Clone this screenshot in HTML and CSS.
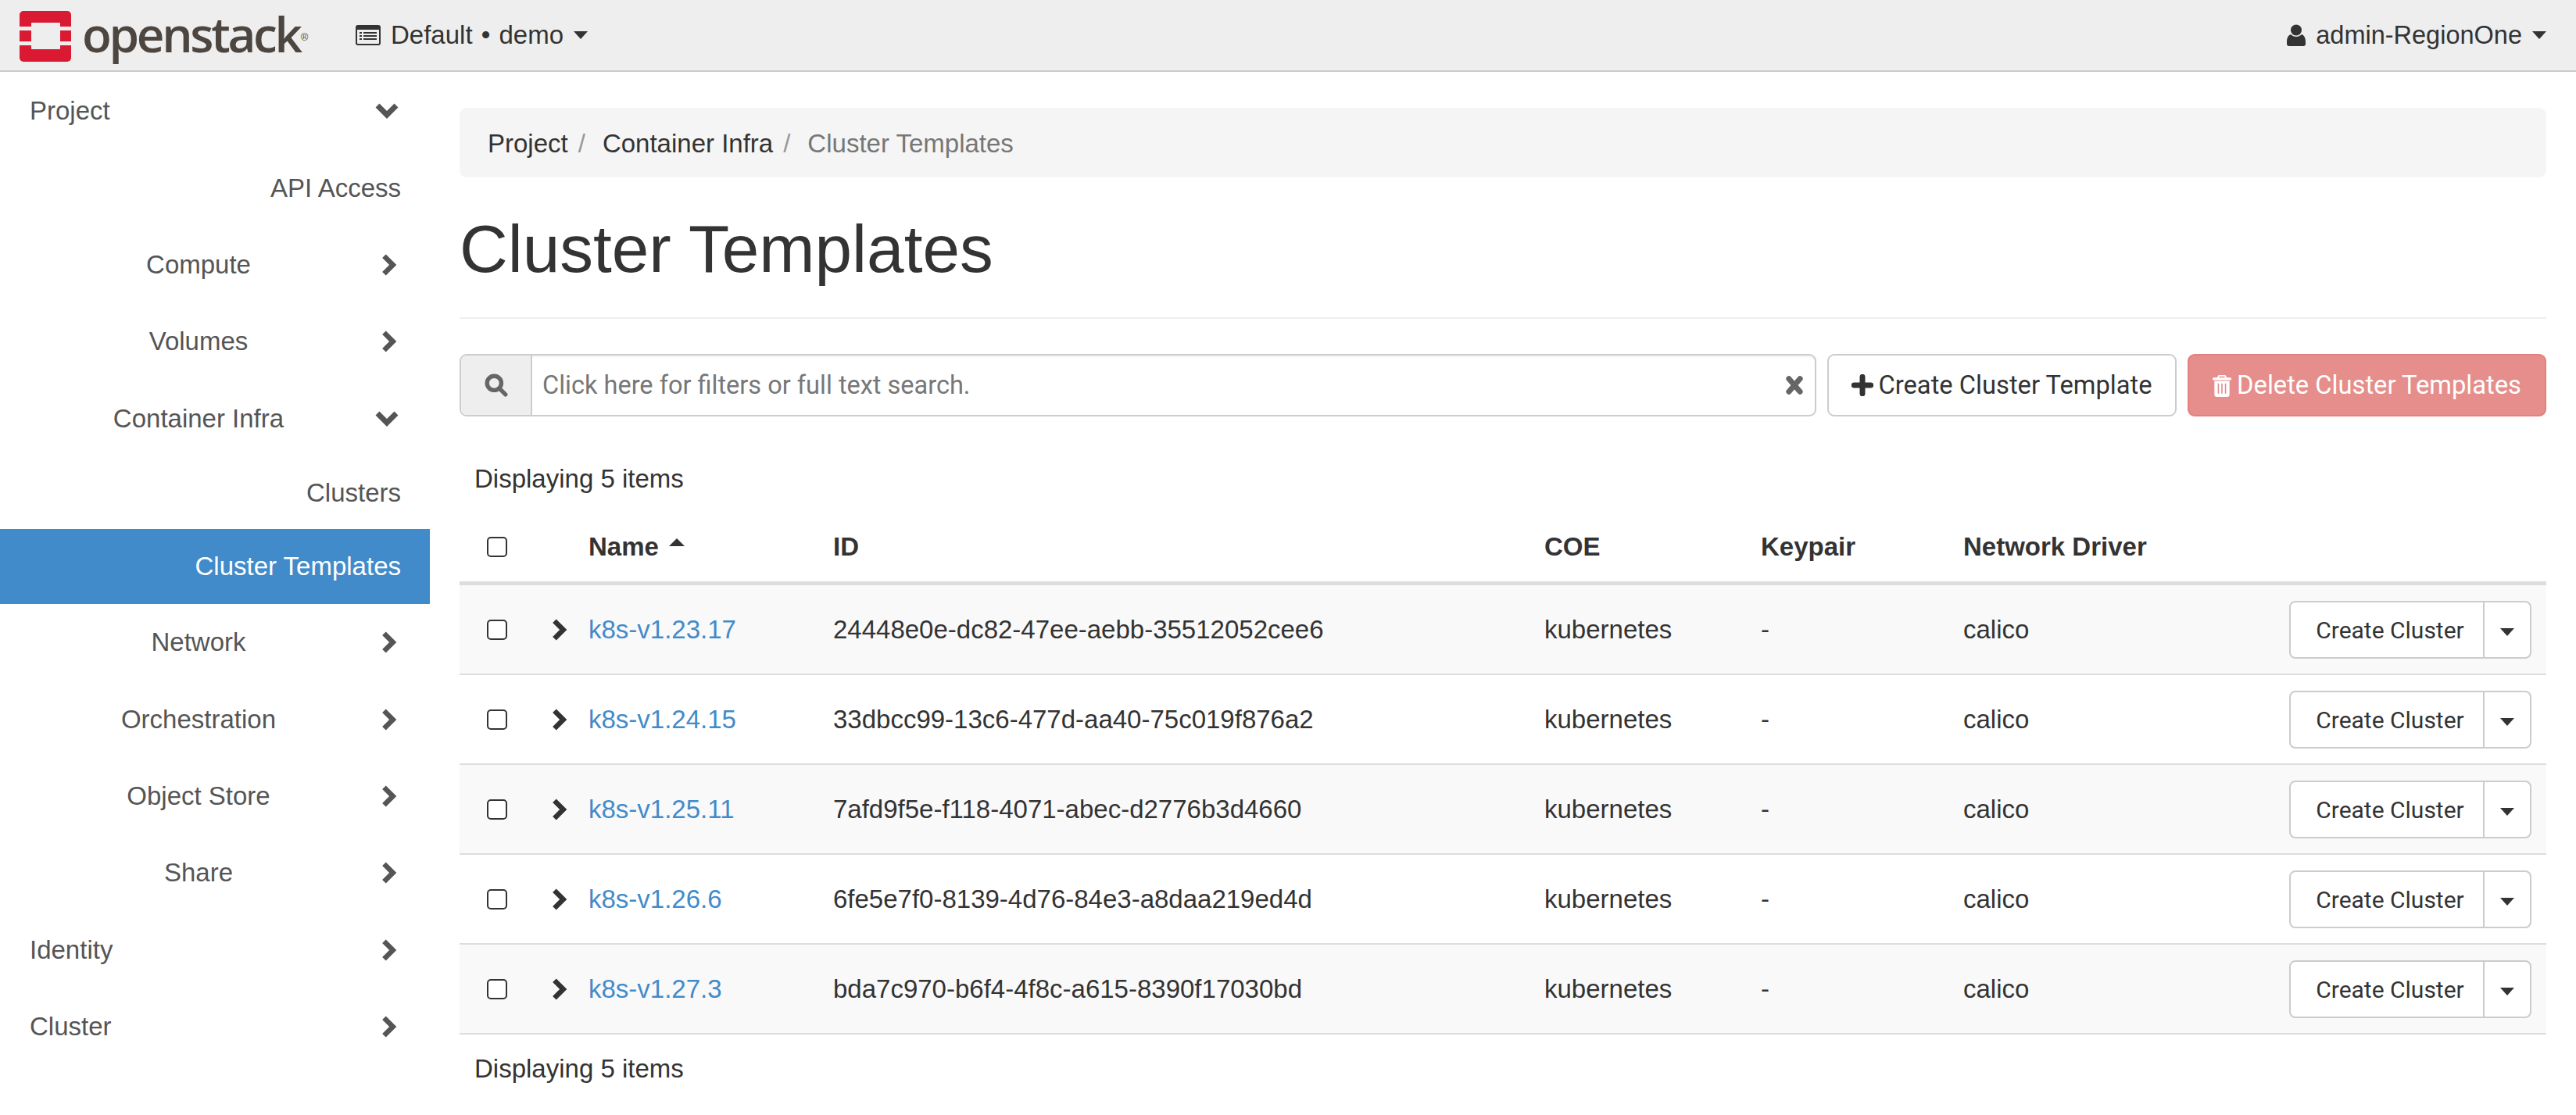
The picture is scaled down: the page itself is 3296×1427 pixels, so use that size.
FILE: index.html
```html
<!DOCTYPE html>
<html lang="en">
<head>
    <meta charset="UTF-8">
    <title>Cluster Templates</title>
    <link rel="stylesheet" href="styles.css">
</head>
<body>
    <svg class="sprites" width="0" height="0">
        <symbol id="chev-right" viewBox="0 0 20 32"><path d="M3 4l12 12L3 28" fill="none" stroke="currentColor" stroke-width="7" stroke-linejoin="miter"/></symbol>
        <symbol id="chev-down" viewBox="0 0 32 20"><path d="M4 3l12 12L28 3" fill="none" stroke="currentColor" stroke-width="7"/></symbol>
    </svg>

    <header class="topbar">
        <div class="brand">
            <svg class="logo" viewBox="0 0 66 65">
                <path fill="#da1a32" fill-rule="evenodd" d="M5 0h56a5 5 0 0 1 5 5v15H52v-4a1 1 0 0 0-1-1H16a1 1 0 0 0-1 1v4H0V5a5 5 0 0 1 5-5zM0 25h15v14H0zM52 25h14v14H52zM0 44h15v4a1 1 0 0 0 1 1h35a1 1 0 0 0 1-1v-4h14v16a5 5 0 0 1-5 5H5a5 5 0 0 1-5-5z"/>
            </svg>
            <span class="brand-name">openstack</span><span class="brand-mark">®</span>
        </div>
        <div class="project-picker">
            <svg class="list-icon" viewBox="0 0 32 26">
                <path fill="#333" fill-rule="evenodd" d="M3 0h26a3 3 0 0 1 3 3v20a3 3 0 0 1-3 3H3a3 3 0 0 1-3-3V3a3 3 0 0 1 3-3zM2 6v17a1 1 0 0 0 1 1h26a1 1 0 0 0 1-1V6zM5 9h3v2H5zM10 9h17v2H10zM5 13h3v2H5zM10 13h17v2H10zM5 17h3v2H5zM10 17h17v2H10z"/>
            </svg>
            <span class="project-name">Default • demo</span>
            <span class="caret"></span>
        </div>
        <div class="user-menu">
            <svg class="user-icon" viewBox="0 0 24 28">
                <circle cx="12" cy="7.500" r="7" fill="#333"/>
                <path fill="#333" d="M5 13c2 2 4.500 3 7 3s5-1 7-3c3 1 5 4 5 10v2a3 3 0 0 1-3 3H3a3 3 0 0 1-3-3v-2c0-6 2-9 5-10z"/>
            </svg>
            <span>admin-RegionOne</span>
            <span class="caret"></span>
        </div>
    </header>

    <div class="page">
        <nav class="sidebar">
            <a class="nav-row nav-top"><span class="nav-label">Project</span><svg class="chev-d"><use href="#chev-down"/></svg></a>
            <a class="nav-row nav-leaf"><span class="nav-label">API Access</span></a>
            <a class="nav-row"><span class="nav-label">Compute</span><svg class="chev-r"><use href="#chev-right"/></svg></a>
            <a class="nav-row"><span class="nav-label">Volumes</span><svg class="chev-r"><use href="#chev-right"/></svg></a>
            <a class="nav-row"><span class="nav-label">Container Infra</span><svg class="chev-d"><use href="#chev-down"/></svg></a>
            <a class="nav-row nav-leaf nav-short"><span class="nav-label">Clusters</span></a>
            <a class="nav-row nav-leaf nav-active"><span class="nav-label">Cluster Templates</span></a>
            <a class="nav-row"><span class="nav-label">Network</span><svg class="chev-r"><use href="#chev-right"/></svg></a>
            <a class="nav-row"><span class="nav-label">Orchestration</span><svg class="chev-r"><use href="#chev-right"/></svg></a>
            <a class="nav-row"><span class="nav-label">Object Store</span><svg class="chev-r"><use href="#chev-right"/></svg></a>
            <a class="nav-row"><span class="nav-label">Share</span><svg class="chev-r"><use href="#chev-right"/></svg></a>
            <a class="nav-row nav-top"><span class="nav-label">Identity</span><svg class="chev-r"><use href="#chev-right"/></svg></a>
            <a class="nav-row nav-top"><span class="nav-label">Cluster</span><svg class="chev-r"><use href="#chev-right"/></svg></a>
        </nav>

        <main class="content">
            <ol class="breadcrumb">
                <li>Project<span class="crumb-sep">/</span></li>
                <li>Container Infra<span class="crumb-sep">/</span></li>
                <li class="crumb-current">Cluster Templates</li>
            </ol>

            <h1 class="page-title">Cluster Templates</h1>

            <div class="toolbar">
                <div class="search-box">
                    <span class="search-addon">
                        <svg class="search-icon" viewBox="0 0 28 28">
                            <circle cx="11.500" cy="11.500" r="8.500" fill="none" stroke="#666" stroke-width="5"/>
                            <path d="M18 18l7 7" stroke="#666" stroke-width="5" stroke-linecap="round"/>
                        </svg>
                    </span>
                    <span class="search-text">Click here for filters or full text search.</span>
                    <svg class="clear-icon" viewBox="0 0 22 22"><path d="M5 4l12 14M17 4L5 18" stroke="#666" stroke-width="6" stroke-linecap="round"/></svg>
                </div>
                <button class="btn btn-create">
                    <svg class="plus-icon" viewBox="0 0 26 26"><path d="M13 3v20M3 13h20" stroke="#333" stroke-width="6.500" stroke-linecap="round"/></svg>
                    Create Cluster Template
                </button>
                <button class="btn btn-delete">
                    <svg class="trash-icon" viewBox="0 0 22 27">
                        <path fill="#fff" fill-rule="evenodd" d="M7 1h8l2 3h4a1 1 0 0 1 1 1v2H0V5a1 1 0 0 1 1-1h4zM8 2.500L7.300 4h7.400L14 2.500zM2 8h18v16a3 3 0 0 1-3 3H5a3 3 0 0 1-3-3zM6 11v12h1.500V11zM10.200 11v12h1.500V11zM14.500 11v12H16V11z"/>
                    </svg>
                    Delete Cluster Templates
                </button>
            </div>

            <p class="item-count">Displaying 5 items</p>

            <table class="data-table">
                <thead>
                    <tr>
                        <th class="col-check"><span class="checkbox"></span></th>
                        <th class="col-expand"></th>
                        <th class="col-name">Name <span class="sort-up"></span></th>
                        <th class="col-id">ID</th>
                        <th class="col-coe">COE</th>
                        <th class="col-key">Keypair</th>
                        <th class="col-net">Network Driver</th>
                        <th></th>
                    </tr>
                </thead>
                <tbody>
                    <tr>
                        <td><span class="checkbox"></span></td>
                        <td><svg class="chev-row"><use href="#chev-right"/></svg></td>
                        <td><a class="row-link">k8s-v1.23.17</a></td>
                        <td>24448e0e-dc82-47ee-aebb-35512052cee6</td>
                        <td>kubernetes</td>
                        <td>-</td>
                        <td>calico</td>
                        <td class="cell-actions"><div class="btn-group"><button class="btn-main">Create Cluster</button><button class="btn-split"><span class="caret caret-dark"></span></button></div></td>
                    </tr>
                    <tr>
                        <td><span class="checkbox"></span></td>
                        <td><svg class="chev-row"><use href="#chev-right"/></svg></td>
                        <td><a class="row-link">k8s-v1.24.15</a></td>
                        <td>33dbcc99-13c6-477d-aa40-75c019f876a2</td>
                        <td>kubernetes</td>
                        <td>-</td>
                        <td>calico</td>
                        <td class="cell-actions"><div class="btn-group"><button class="btn-main">Create Cluster</button><button class="btn-split"><span class="caret caret-dark"></span></button></div></td>
                    </tr>
                    <tr>
                        <td><span class="checkbox"></span></td>
                        <td><svg class="chev-row"><use href="#chev-right"/></svg></td>
                        <td><a class="row-link">k8s-v1.25.11</a></td>
                        <td>7afd9f5e-f118-4071-abec-d2776b3d4660</td>
                        <td>kubernetes</td>
                        <td>-</td>
                        <td>calico</td>
                        <td class="cell-actions"><div class="btn-group"><button class="btn-main">Create Cluster</button><button class="btn-split"><span class="caret caret-dark"></span></button></div></td>
                    </tr>
                    <tr>
                        <td><span class="checkbox"></span></td>
                        <td><svg class="chev-row"><use href="#chev-right"/></svg></td>
                        <td><a class="row-link">k8s-v1.26.6</a></td>
                        <td>6fe5e7f0-8139-4d76-84e3-a8daa219ed4d</td>
                        <td>kubernetes</td>
                        <td>-</td>
                        <td>calico</td>
                        <td class="cell-actions"><div class="btn-group"><button class="btn-main">Create Cluster</button><button class="btn-split"><span class="caret caret-dark"></span></button></div></td>
                    </tr>
                    <tr>
                        <td><span class="checkbox"></span></td>
                        <td><svg class="chev-row"><use href="#chev-right"/></svg></td>
                        <td><a class="row-link">k8s-v1.27.3</a></td>
                        <td>bda7c970-b6f4-4f8c-a615-8390f17030bd</td>
                        <td>kubernetes</td>
                        <td>-</td>
                        <td>calico</td>
                        <td class="cell-actions"><div class="btn-group"><button class="btn-main">Create Cluster</button><button class="btn-split"><span class="caret caret-dark"></span></button></div></td>
                    </tr>
                </tbody>
            </table>

            <p class="item-count item-count-bottom">Displaying 5 items</p>
        </main>
    </div>
</body>
</html>
```

FILE: styles.css
```css
* {
    box-sizing: border-box;
}

html, body {
    margin: 0;
    height: 100%;
}

body {
    font-family: "Liberation Sans", Arial, sans-serif;
    font-size: 33px;
    color: #333;
    background: #fff;
    overflow: hidden;
}

.sprites {
    display: block;
}

/* top bar */
.topbar {
    display: flex;
    align-items: center;
    height: 92px;
    padding: 0 38px 0 25px;
    background: #eee;
    border-bottom: 2px solid #ccc;
}

.brand {
    display: flex;
    align-items: center;
    width: 428px;
    color: #4d4640;
}

.logo {
    width: 66px;
    height: 65px;
    margin-top: 2px;
}

.brand-name {
    font-family: "Open Sans", sans-serif;
    font-size: 62px;
    font-weight: 600;
    line-height: 1;
    margin-left: 14px;
    letter-spacing: -3.300px;
    margin-top: -5px;
}

.brand-mark {
    font-size: 13px;
    align-self: flex-end;
    margin: 0 0 24px 1px;
}

.project-picker {
    display: flex;
    align-items: center;
}

.project-name {
    word-spacing: 2px;
}

.list-icon {
    width: 32px;
    height: 26px;
    margin: 0 13px 0 2px;
}

.user-menu {
    display: flex;
    align-items: center;
    margin-left: auto;
    font-size: 32.5px;
}

.user-icon {
    width: 24px;
    height: 28px;
    margin-right: 13px;
}

.caret {
    display: inline-block;
    width: 0;
    height: 0;
    margin-left: 13px;
    border-top: 10px solid #333;
    border-left: 9.500px solid transparent;
    border-right: 9.500px solid transparent;
}

/* page */
.page {
    display: flex;
}

/* side menu */
.sidebar {
    flex: 0 0 550px;
    color: #555;
    padding-top: 1px;
}

.nav-row {
    display: flex;
    align-items: center;
    height: 98.4px;
    padding: 0 37px 0 38px;
}

.nav-label {
    flex: 1;
    text-align: center;
}

.nav-top .nav-label {
    text-align: left;
}

.nav-leaf .nav-label {
    text-align: right;
}

.nav-short {
    height: 92px;
}

.nav-active {
    height: 96px;
    color: #fff;
    background: #428bca;
}

.chev-r {
    width: 20px;
    height: 30px;
    margin: 0 5px 0 18px;
}

.chev-d {
    width: 32px;
    height: 20px;
    margin: 0 2px 0 9px;
}

/* content */
.content {
    flex: 1;
    padding: 46px 38px 0;
}

.breadcrumb {
    display: flex;
    align-items: center;
    height: 89px;
    margin: 0;
    padding: 3px 36px 0;
    list-style: none;
    background: #f5f5f5;
    border-radius: 9px;
}

.crumb-sep {
    margin: 0 22px 0 13px;
    color: #999;
}

.crumb-current {
    color: #777;
}

.page-title {
    margin: 0;
    padding: 46px 0 41px;
    font-size: 85.500px;
    line-height: 92px;
    font-weight: 500;
    border-bottom: 2px solid #eee;
}

.toolbar {
    display: flex;
    gap: 14px;
    margin-top: 45px;
    height: 80px;
}

.search-box {
    flex: 1;
    display: flex;
    align-items: center;
    border: 2px solid #ccc;
    border-radius: 9px;
    box-shadow: inset 0 2px 2px rgba(0, 0, 0, .05);
    overflow: hidden;
}

.search-addon {
    display: flex;
    align-items: center;
    justify-content: center;
    flex: 0 0 91px;
    height: 100%;
    background: #eee;
    border-right: 2px solid #ccc;
}

.search-icon {
    width: 30px;
    height: 30px;
}

.search-text {
    flex: 1;
    padding-left: 13px;
    color: #777;
    font-family: Roboto, sans-serif;
    font-size: 32.5px;
}

.clear-icon {
    width: 26px;
    height: 26px;
    margin-right: 13px;
}

.btn {
    display: flex;
    align-items: center;
    justify-content: center;
    height: 80px;
    font-family: Roboto, sans-serif;
    font-size: 32.7px;
    border-radius: 9px;
}

.btn-create {
    width: 447px;
    color: #333;
    background: #fff;
    border: 2px solid #ccc;
}

.plus-icon {
    width: 28px;
    height: 28px;
    margin-right: 6px;
}

.btn-delete {
    width: 459px;
    color: #fff;
    background: #e58e8b;
    border: 2px solid #e4807e;
}

.trash-icon {
    width: 24px;
    height: 29px;
    margin-right: 7px;
}

.item-count {
    margin: 61px 0 0 19px;
    line-height: 38px;
}

.item-count-bottom {
    margin-top: 25px;
}

/* table */
.data-table {
    width: 100%;
    margin-top: 21px;
    table-layout: fixed;
    border-collapse: separate;
    border-spacing: 0;
}

.data-table th {
    height: 96px;
    padding: 3px 0 0;
    text-align: left;
    font-weight: 700;
    border-bottom: 5px solid #ddd;
}

.data-table td {
    height: 115px;
    padding: 1px 0 0;
    border-bottom: 2px solid #ddd;
}

.data-table tbody tr:nth-child(odd) {
    background: #f9f9f9;
}

.col-check { width: 100px; }
.col-expand { width: 65px; }
.col-name { width: 313px; }
.col-id { width: 910px; }
.col-coe { width: 277px; }
.col-key { width: 259px; }
.col-net { width: 417px; }

.checkbox {
    display: block;
    width: 26px;
    height: 26px;
    margin-left: 35px;
    background: #fff;
    border: 2px solid #333;
    border-radius: 5px;
}

.chev-row {
    display: block;
    width: 20px;
    height: 30px;
    margin-left: 18px;
}

.sort-up {
    display: inline-block;
    width: 0;
    height: 0;
    margin: 0 0 16px 4px;
    vertical-align: middle;
    border-bottom: 10px solid #333;
    border-left: 10px solid transparent;
    border-right: 10px solid transparent;
}

.row-link {
    color: #428bca;
}

.cell-actions {
    text-align: right;
}

.btn-group {
    display: flex;
    width: 310px;
    height: 74px;
}

.btn-main,
.btn-split {
    font-family: Roboto, sans-serif;
    font-size: 30px;
    color: #333;
    background: #fff;
    border: 2px solid #ccc;
}

.btn-main {
    flex: 1;
    padding: 0 0 0 8px;
    border-radius: 8px 0 0 8px;
}

.btn-split {
    flex: 0 0 62px;
    margin-left: -2px;
    padding: 0;
    border-radius: 0 8px 8px 0;
}

.caret-dark {
    margin-left: 0;
    border-top-width: 10px;
    border-left-width: 9px;
    border-right-width: 9px;
    vertical-align: middle;
}
```
